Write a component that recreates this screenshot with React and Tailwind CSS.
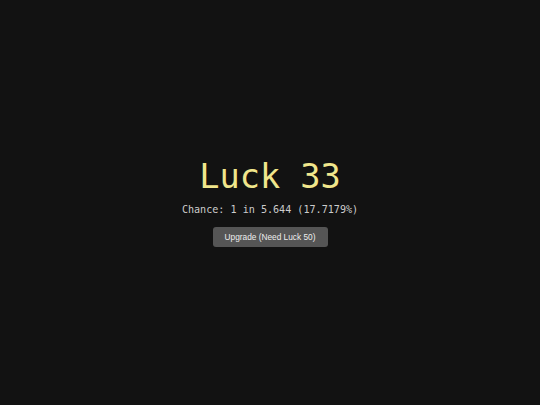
export default function App() {
  return (
    <div className="flex min-h-screen w-full flex-col items-center justify-center bg-[#121212] text-center">
      <h1 className="font-['DejaVu_Sans_Mono',monospace] text-[33.6px] leading-[38px] text-[#f0e68c]">
        Luck 33
      </h1>
      <p className="mt-[7px] font-['DejaVu_Sans_Mono',monospace] text-[10.1px] leading-[14px] text-[#cccccc]">
        Chance: 1 in 5.644 (17.7179%)
      </p>
      <button className="mt-[10px] h-[20px] w-[115px] rounded-[3px] bg-[#555555] font-['Liberation_Sans',Arial,sans-serif] text-[8.3px] text-[#eeeeee]">
        Upgrade (Need Luck 50)
      </button>
    </div>
  );
}
